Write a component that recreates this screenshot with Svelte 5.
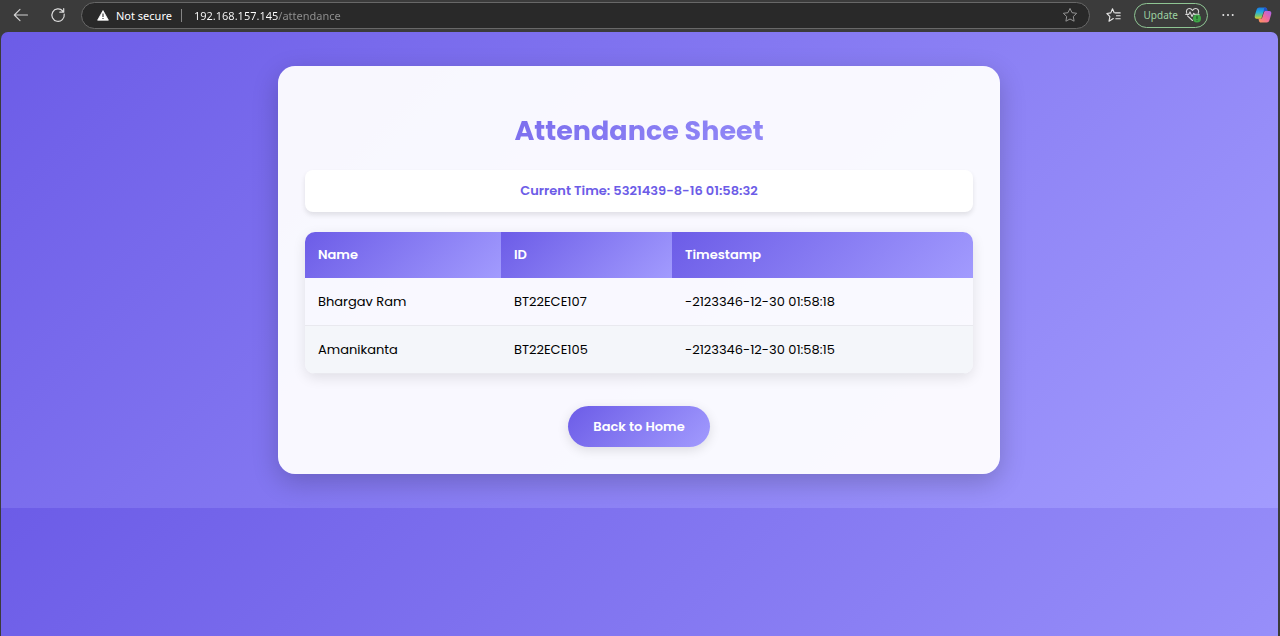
<script>
  const rows = [
    { name: 'Bhargav Ram', id: 'BT22ECE107', time: '-2123346-12-30 01:58:18' },
    { name: 'Amanikanta', id: 'BT22ECE105', time: '-2123346-12-30 01:58:15' }
  ];
  const currentTime = '5321439-8-16 01:58:32';
  let address = $state('192.168.157.145/attendance');
</script>

<div class="browser">
  <header class="toolbar">
    <button class="icon back" aria-label="Back">
      <svg width="16" height="14" viewBox="0 0 16 14" fill="none" stroke="#d2d2d2" stroke-width="1.1" stroke-linecap="round" stroke-linejoin="round"><path d="M14.5 7H1.5M7 1.3 1.3 7 7 12.7" /></svg>
    </button>
    <button class="icon" aria-label="Refresh">
      <svg width="16" height="16" viewBox="0 0 16 16" fill="none" stroke="#dcdcdc" stroke-width="1.2" stroke-linecap="round" stroke-linejoin="round"><path d="M14.2 7.2A6.2 6.2 0 1 1 12.7 4M13.7 1.6V5.2H9.8" /></svg>
    </button>
    <div class="omnibox">
      <svg width="12" height="11" viewBox="0 0 12 11"><path d="M6 .6 11.4 10.2H.6Z" fill="#fff" stroke="#fff" stroke-width=".8" stroke-linejoin="round" /><path d="M6 3.5v3.4M6 8v1.1" stroke="#2b2b2b" stroke-width="1.1" /></svg>
      <span class="secure">Not secure</span>
      <span class="bar"></span>
      <input class="address" type="text" aria-label="Address" spellcheck="false" bind:value={address} />
      <button class="icon" aria-label="Add to favorites">
        <svg width="16" height="16" viewBox="0 0 16 16" fill="none" stroke="#939393" stroke-width="1" stroke-linejoin="round"><path d="m8 1.4 2 4.3 4.7.6-3.4 3.2.8 4.7L8 12l-4.1 2.2.8-4.7L1.3 6.3 6 5.700Z" /></svg>
      </button>
    </div>
    <button class="icon fav" aria-label="Favorites">
      <svg width="16" height="16" viewBox="0 0 16 16" fill="none" stroke="#e8e8e8" stroke-width="1.1" stroke-linecap="round" stroke-linejoin="round"><path d="M9.300 5.900H14.200M10.500 8.800H14.200M9.800 11.700H14.200M7.300 11.500 3 14.200 3.900 9.600.9 6.500 4.800 5.900 6.500 1.800 8.200 5.700" /></svg>
    </button>
    <button class="update">
      Update
      <svg width="17" height="16" viewBox="0 0 17 16" fill="none" stroke="#d9d9d9" stroke-width="1.1" stroke-linecap="round" stroke-linejoin="round"><path d="M1.700 6C.8 3.500 2.300 1.500 4.300 1.500 5.900 1.500 6.900 2.500 7.500 3.500 8.100 2.500 9.100 1.500 10.700 1.500 12.900 1.500 14.300 3.600 13.300 6M2.500 8.900 7.500 13.500M.8 7.400H3.700L5 4.900 7 9.500 8.700 6.300 9.600 7.400H14" /><circle cx="12" cy="11.400" r="4" fill="#3fa648" stroke="none" /><path d="M12 9.400v2.200M12 13.200v.1" stroke="#1d4a22" /></svg>
    </button>
    <button class="icon more" aria-label="Settings and more">
      <svg width="12" height="4" viewBox="0 0 12 4" fill="#e8e8e8"><circle cx="1.300" cy="2" r="1" /><circle cx="6" cy="2" r="1" /><circle cx="10.700" cy="2" r="1" /></svg>
    </button>
    <button class="icon copilot" aria-label="Copilot">
      <svg width="20" height="18" viewBox="0 0 20 18">
        <defs>
          <linearGradient id="cool" x1="0" y1="0" x2="0" y2="1"><stop offset="0" stop-color="#1c78df" /><stop offset=".4" stop-color="#22aee2" /><stop offset=".75" stop-color="#7ac66b" /><stop offset="1" stop-color="#f0cf2e" /></linearGradient>
          <linearGradient id="warm" x1="1" y1="0" x2="0" y2="1"><stop offset="0" stop-color="#a862ee" /><stop offset=".5" stop-color="#f0699e" /><stop offset="1" stop-color="#ff9a55" /></linearGradient>
        </defs>
        <path d="M6 .7H12.300C13.600.7 14.200 1.500 14.600 3L15 4.300H12.500C11.300 4.300 10.800 5 10.400 6.200L8.600 11.800C8.200 13 7.600 13.300 6.700 13.300H3.200C1 13.300.4 11.600 1 9.300L2.600 3.900C3.200 1.800 4 .7 6 .7Z" fill="url(#cool)" />
        <path d="M11.500.7h.8c1.300 0 1.900.8 2.300 2.300l.4 1.300h-2.500c-1.200 0-1.700.7-2.100 1.900Z" fill="#2450cc" />
        <path d="M14 17.300H7.700C6.400 17.300 5.800 16.500 5.400 15L5 13.300H7C8.200 13.300 8.900 12.800 9.300 11.500L11 6.200C11.400 4.900 12 4.500 13.300 4.500H16.800C19 4.500 19.600 6.200 19 8.500L17.400 14C16.800 16.200 16 17.300 14 17.300Z" fill="url(#warm)" />
      </svg>
    </button>
  </header>

  <main class="viewport">
    <section class="card">
      <h1>Attendance Sheet</h1>
      <p class="clock">Current Time: {currentTime}</p>
      <table>
        <thead>
          <tr><th class="name" scope="col">Name</th><th class="id" scope="col">ID</th><th scope="col">Timestamp</th></tr>
        </thead>
        <tbody>
          {#each rows as row}
            <tr><td>{row.name}</td><td>{row.id}</td><td>{row.time}</td></tr>
          {/each}
        </tbody>
      </table>
      <a class="home" href="#home">Back to Home</a>
    </section>
  </main>
</div>

<style>
  :global(body) {
    margin: 0;
    background: #3b3b3b;
  }
  .browser {
    --brand: linear-gradient(135deg, #6c5ce7, #a29bfe);
    min-height: 100vh;
    display: flex;
    flex-direction: column;
    background: #3b3b3b;
    font-family: Poppins, Inter, sans-serif;
  }
  .browser,
  .browser * {
    box-sizing: border-box;
  }
  button {
    font: inherit;
    border: 0;
    padding: 0;
    background: none;
    cursor: pointer;
  }
  .toolbar {
    height: 32px;
    display: flex;
    align-items: center;
    padding: 0 8px 2px 12px;
    font-family: 'Segoe UI', 'Noto Sans', sans-serif;
    font-size: 11px;
  }
  .icon {
    display: flex;
    flex: none;
    justify-content: center;
    align-items: center;
    width: 18px;
    height: 20px;
  }
  .back {
    margin-right: 19px;
  }
  .omnibox {
    flex: 1;
    display: flex;
    align-items: center;
    height: 27px;
    margin: 0 15px 0 14px;
    padding: 0 10px 0 15px;
    border: 1px solid #686868;
    border-radius: 14px;
    background: #292929;
    color: #fff;
  }
  .secure {
    margin-left: 7px;
    white-space: nowrap;
  }
  .bar {
    width: 1px;
    height: 13px;
    margin: 0 12px 0 9px;
    background: #858585;
  }
  .address {
    flex: 1;
    min-width: 0;
    border: 0;
    padding: 0;
    outline: 0;
    font: inherit;
    color: transparent;
    background: linear-gradient(90deg, #fff 84px, #929292 84px);
    background-clip: text;
  }
  .fav {
    margin-right: 11px;
  }
  .update {
    display: flex;
    align-items: center;
    gap: 7px;
    height: 25px;
    padding: 0 5px 0 9px;
    border: 1px solid #8ec493;
    border-radius: 13px;
    color: #9ed3a2;
    font-size: 10px;
    white-space: nowrap;
  }
  .more {
    margin: 0 17px 0 11px;
  }
  .viewport {
    flex: 1;
    margin: 0 2px 0 1px;
    padding: 34px 25px 34px 24px;
    border-radius: 7px 7px 0 0;
    background: var(--brand) 0 0 / 100% 476px;
  }
  .card {
    max-width: 722px;
    margin: 0 auto;
    padding: 47px 27px 27px;
    border-radius: 17px;
    background: rgba(255, 255, 255, 0.95);
    box-shadow: 0 8px 27px rgba(0, 0, 0, 0.2);
    text-align: center;
  }
  h1 {
    margin: 0 0 21px;
    font-size: 27px;
    line-height: 36px;
    font-weight: 700;
    color: transparent;
    background: var(--brand);
    background-clip: text;
  }
  .clock {
    margin: 0 0 20px;
    padding: 10px;
    border-radius: 8px;
    background: #fff;
    box-shadow: 0 3px 5px rgba(0, 0, 0, 0.1);
    color: #6c5ce7;
    font-size: 13px;
    line-height: 22px;
    font-weight: 600;
  }
  table {
    width: 100%;
    margin-bottom: 32px;
    border-spacing: 0;
    border-radius: 10px;
    overflow: hidden;
    box-shadow: 0 4px 13px rgba(0, 0, 0, 0.1);
    font-size: 13px;
    line-height: 21px;
    text-align: left;
  }
  th,
  td {
    padding: 13px;
  }
  th {
    background: var(--brand);
    color: #fff;
    line-height: 20px;
    font-weight: 600;
  }
  .name {
    width: 196px;
  }
  .id {
    width: 171px;
  }
  td {
    border-bottom: 1px solid #e9e9ef;
    color: #000;
  }
  tbody tr:nth-child(even) td {
    background: #f4f6fa;
  }
  .home {
    display: inline-block;
    padding: 10px 25px;
    border-radius: 42px;
    background: var(--brand);
    box-shadow: 0 3px 12px rgba(0, 0, 0, 0.12);
    color: #fff;
    font-size: 13px;
    line-height: 21px;
    font-weight: 600;
    text-decoration: none;
    vertical-align: top;
  }
</style>
